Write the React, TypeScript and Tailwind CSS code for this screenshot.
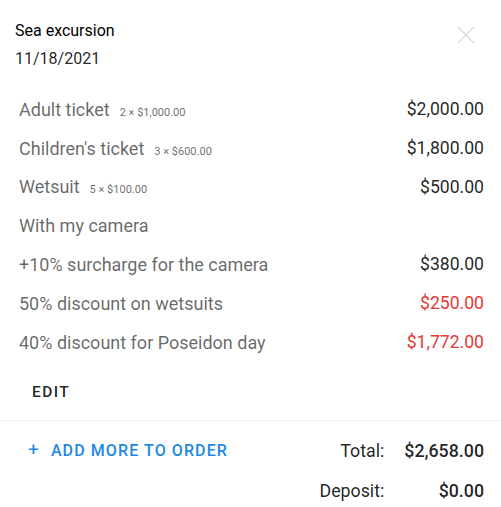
import { X } from "lucide-react";

const items = [
  { label: "Adult ticket", qty: "2 × $1,000.00", price: "$2,000.00" },
  { label: "Children's ticket", qty: "3 × $600.00", price: "$1,800.00" },
  { label: "Wetsuit", qty: "5 × $100.00", price: "$500.00" },
  { label: "With my camera" },
  { label: "+10% surcharge for the camera", price: "$380.00" },
  { label: "50% discount on wetsuits", price: "$250.00", red: true },
  { label: "40% discount for Poseidon day", price: "$1,772.00", red: true },
];

export default function App() {
  return (
    <div className="w-[501px] h-[507px] bg-white font-['Roboto',sans-serif] overflow-hidden">
      {/* Header */}
      <div className="flex items-start justify-between pl-[15px] pr-[20px] pt-[20px]">
        <div>
          <p className="text-[16px] leading-[22px] text-black">Sea excursion</p>
          <p className="text-[16px] leading-[22px] text-black/87 mt-[6px]">11/18/2021</p>
        </div>
        <button className="text-[#dddddd]" aria-label="Close">
          <X className="w-[30px] h-[30px]" strokeWidth={1.2} />
        </button>
      </div>

      {/* Items */}
      <div className="mt-[20px] pl-[19px] pr-[17px]">
        {items.map((item) => (
          <div key={item.label} className="flex items-center justify-between h-[38.8px]">
            <div className="flex items-baseline gap-[10px]">
              <span className="text-[18px] text-black/60">{item.label}</span>
              {item.qty && <span className="text-[11px] text-black/60">{item.qty}</span>}
            </div>
            {item.price && (
              <span className={`text-[17.6px] ${item.red ? "text-[#e53935]" : "text-black/87"}`}>
                {item.price}
              </span>
            )}
          </div>
        ))}
      </div>

      {/* Edit */}
      <div className="pl-[20px] mt-[13px]">
        <button className="h-[36px] px-[12px] text-[15.5px] font-medium tracking-[1.4px] text-black/87">
          EDIT
        </button>
      </div>

      <div className="mt-[9px] border-t border-[#eeeeee]" />

      {/* Footer */}
      <div className="flex items-start justify-between pl-[28px] pr-[17px] pt-[19px]">
        <button className="flex items-center gap-[11px] text-[16px] font-medium tracking-[1.1px] text-[#1e88e5] h-[22px]">
          <span className="text-[19px] font-normal">+</span>
          ADD MORE TO ORDER
        </button>
        <div className="grid grid-cols-[auto_auto] gap-x-[20px] gap-y-[18px] text-[17.8px] leading-[22px]">
          <span className="text-right text-black/87">Total:</span>
          <span className="text-right font-medium text-black/87">$2,658.00</span>
          <span className="text-right text-black/87">Deposit:</span>
          <span className="text-right font-medium text-black/87">$0.00</span>
        </div>
      </div>
    </div>
  );
}
